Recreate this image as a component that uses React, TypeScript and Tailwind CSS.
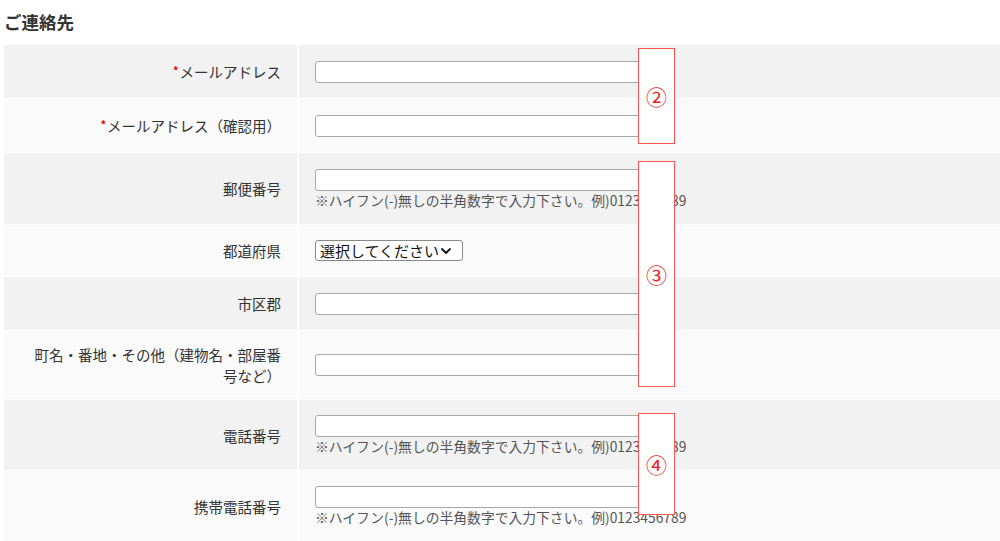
import React from "react";

const font = { fontFamily: '"Noto Sans CJK JP", "Noto Sans", sans-serif' };

function Input() {
  return <div className="h-[22px] w-[345px] rounded-[3px] border border-[#a8a8a8] bg-white" />;
}

function Hint() {
  return (
    <div className="text-[13.8px] leading-[18px] text-[#555] whitespace-nowrap">
      ※ハイフン(-)無しの半角数字で入力下さい。例)0123456789
    </div>
  );
}

function Row({
  h,
  bg,
  label,
  required,
  children,
}: {
  h: string;
  bg: string;
  label: React.ReactNode;
  required?: boolean;
  children: React.ReactNode;
}) {
  return (
    <div className={`flex ${h} border-t border-white`}>
      <div className={`w-[293px] shrink-0 ${bg} flex items-center justify-end pl-[24px] pr-[16px] text-right text-[14.5px] leading-[21px] text-[#333]`}>
        <div>
          {required && <span className="text-[11px] font-bold text-[#e00] align-top relative top-[-1px] mr-[1px]">*</span>}
          {label}
        </div>
      </div>
      <div className="w-[2px] shrink-0 bg-white" />
      <div className={`flex-1 ${bg} flex flex-col justify-center pl-[16px]`}>{children}</div>
    </div>
  );
}

function Mark({ top, height, num }: { top: string; height: string; num: string }) {
  return (
    <div
      className={`absolute left-[638px] w-[37px] ${top} ${height} border-[1.5px] border-[#ff5555] bg-white flex items-center justify-center text-[21px] leading-none text-[#f02020]`}
    >
      {num}
    </div>
  );
}

export default function App() {
  return (
    <div className="relative w-[1000px] h-[541px] overflow-hidden bg-white" style={font}>
      <div className="h-[44px] pl-[4px] pt-[11px] text-[17.5px] leading-[22px] font-bold text-[#333]">ご連絡先</div>
      <div className="pl-[4px] flex flex-col">
        <Row h="h-[54px]" bg="bg-[#f2f2f2]" label="メールアドレス" required>
          <Input />
        </Row>
        <Row h="h-[54px]" bg="bg-[#fafafa]" label="メールアドレス（確認用）" required>
          <Input />
        </Row>
        <Row h="h-[72px]" bg="bg-[#f2f2f2]" label="郵便番号">
          <Input />
          <Hint />
        </Row>
        <Row h="h-[52px]" bg="bg-[#fafafa]" label="都道府県">
          <div className="inline-flex w-[148px] h-[21px] items-center rounded-[3px] border border-[#888] bg-white pl-[4px] pr-[3px] text-[15px] leading-none text-[#111]">
            <span className="whitespace-nowrap">選択してください</span>
            <svg width="12" height="12" viewBox="0 0 12 12" className="ml-[1px]">
              <path d="M2 4 L6 8 L10 4" fill="none" stroke="#111" strokeWidth="1.8" strokeLinecap="round" strokeLinejoin="round" />
            </svg>
          </div>
        </Row>
        <Row h="h-[54px]" bg="bg-[#f2f2f2]" label="市区郡">
          <Input />
        </Row>
        <Row h="h-[69px]" bg="bg-[#fafafa]" label="町名・番地・その他（建物名・部屋番号など）">
          <Input />
        </Row>
        <Row h="h-[71px]" bg="bg-[#f2f2f2]" label="電話番号">
          <Input />
          <Hint />
        </Row>
        <Row h="h-[71px]" bg="bg-[#fafafa]" label="携帯電話番号">
          <Input />
          <Hint />
        </Row>
      </div>
      <Mark top="top-[48px]" height="h-[96px]" num="②" />
      <Mark top="top-[161px]" height="h-[226px]" num="③" />
      <Mark top="top-[413px]" height="h-[102px]" num="④" />
    </div>
  );
}
